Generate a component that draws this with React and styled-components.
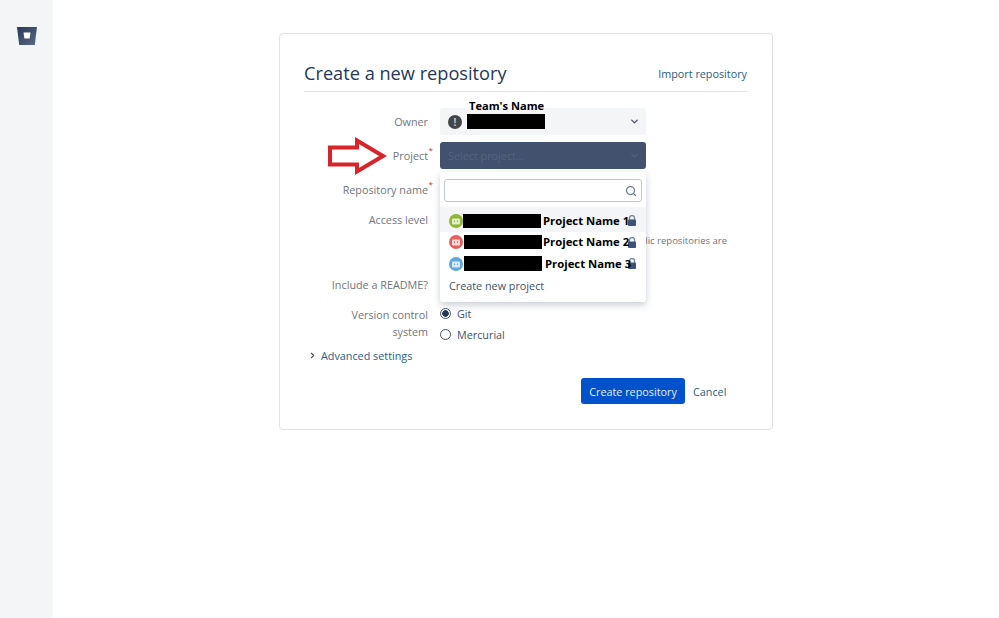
import React from 'react'
import styled, { createGlobalStyle } from 'styled-components'
import { ChevronDown, ChevronRight, Search } from 'lucide-react'

const GlobalStyle = createGlobalStyle`
  html, body {
    margin: 0;
    padding: 0;
    background: #FFFFFF;
    font-family: "Open Sans", "Noto Sans", sans-serif;
    font-size: 10.8px;
    color: #172B4D;
  }
`

const Page = styled.div`
  display: flex;
  width: 999px;
  height: 618px;
  overflow: hidden;
`

const Sidebar = styled.aside`
  width: 53px;
  flex-shrink: 0;
  background: #F4F5F7;
  padding: 27px 0 0 17px;
  box-sizing: border-box;
`

const Main = styled.main`
  flex: 1;
  padding: 33px 0 0 226px;
`

const Card = styled.section`
  position: relative;
  box-sizing: border-box;
  width: 494px;
  height: 397px;
  padding: 26px 25px 0 24px;
  border: 1px solid #DFE1E6;
  border-radius: 4px;
  background: #FFFFFF;
`

const Header = styled.header`
  display: flex;
  justify-content: space-between;
  align-items: flex-end;
  height: 31px;
  margin-bottom: 16px;
  border-bottom: 1px solid #DFE1E6;
`

const Title = styled.h1`
  margin: 0 0 6px;
  font-size: 18.2px;
  font-weight: 400;
  line-height: 24px;
  color: #253858;
`

const HeaderLink = styled.a`
  margin-bottom: 10px;
  color: #2A5C85;
`

const Row = styled.div`
  position: relative;
  display: grid;
  grid-template-columns: 124px 206px;
  column-gap: 12px;
  height: ${(p) => p.$height}px;
`

const Label = styled.label`
  position: relative;
  justify-self: end;
  text-align: right;
  color: #70757E;
  line-height: 17px;
  padding-top: ${(p) => p.$top || 0}px;
  width: ${(p) => (p.$narrow ? '90px' : 'auto')};
`

const Star = styled.span`
  position: absolute;
  top: ${(p) => p.$top}px;
  right: -5px;
  color: #C8322B;
  font-size: 8px;
  line-height: 8px;
`

const Select = styled.div`
  display: flex;
  align-items: center;
  justify-content: space-between;
  box-sizing: border-box;
  height: 27px;
  padding: 0 6px 0 8px;
  border-radius: 3px;
  background: ${(p) => (p.$focus ? '#42526E' : '#F4F5F7')};
  color: ${(p) => (p.$focus ? '#52637F' : '#172B4D')};
`

const OwnerValue = styled.div`
  display: flex;
  align-items: center;
  gap: 5px;
`

const OwnerAvatar = styled.span`
  display: flex;
  align-items: center;
  justify-content: center;
  width: 14px;
  height: 14px;
  border-radius: 50%;
  background: #42454A;
  color: #C8C8C8;
  font-size: 10px;
  font-weight: 700;
`

const Redacted = styled.span`
  display: block;
  flex-shrink: 0;
  width: 78px;
  height: ${(p) => p.$height}px;
  margin-left: ${(p) => p.$offset || 0}px;
  background: #000000;
`

const Annotation = styled.span`
  position: absolute;
  top: -9px;
  left: 165px;
  color: #000000;
  font-size: 11.1px;
  font-weight: 700;
  line-height: 14px;
`

const Arrow = styled.svg`
  position: absolute;
  left: 23px;
  top: -5px;
`

const Dropdown = styled.div`
  position: absolute;
  z-index: 2;
  top: 30px;
  left: 136px;
  box-sizing: border-box;
  width: 206px;
  height: 130px;
  background: #FFFFFF;
  border-radius: 0 0 3px 3px;
  box-shadow: 0 3px 7px rgba(9, 30, 66, 0.22);
  padding-top: 7px;
`

const SearchBox = styled.div`
  display: flex;
  align-items: center;
  justify-content: flex-end;
  box-sizing: border-box;
  height: 23px;
  margin: 0 4px 5px;
  padding-right: 4px;
  border: 1px solid #C1C7D0;
  border-radius: 3px;
  color: #6B778C;
`

const Option = styled.div`
  position: relative;
  box-sizing: border-box;
  display: flex;
  align-items: center;
  height: ${(p) => p.$height}px;
  padding: ${(p) => p.$nudge}px 0 0 9px;
  background: ${(p) => (p.$active ? '#F4F5F7' : 'transparent')};
`

const OptionName = styled.span`
  position: relative;
  z-index: 1;
  margin-left: ${(p) => p.$gap}px;
  color: #000000;
  font-size: 11.3px;
  font-weight: 700;
  white-space: nowrap;
`

const LockIcon = styled.svg`
  position: absolute;
  right: 9px;
  top: 50%;
  margin-top: -5px;
`

const CreateOption = styled.div`
  padding: 3px 0 0 9px;
  color: #42526E;
  line-height: 17px;
`

const Hint = styled.div`
  position: absolute;
  top: 28px;
  left: 136px;
  width: 287px;
  text-align: right;
  color: #70757E;
  font-size: 9.5px;
  white-space: nowrap;
`

const RadioGroup = styled.div`
  display: flex;
  flex-direction: column;
  gap: 4px;
  margin-top: -1px;
`

const RadioRow = styled.div`
  display: flex;
  align-items: center;
  gap: 6px;
  height: 17px;
  color: #42526E;
`

const Radio = styled.span`
  box-sizing: border-box;
  display: block;
  width: 11px;
  height: 11px;
  border: 1px solid #42526E;
  border-radius: 50%;
  background: ${(p) => (p.$checked ? 'radial-gradient(circle, #253858 0 3px, #FFFFFF 3.5px)' : '#FFFFFF')};
`

const Advanced = styled.a`
  display: flex;
  align-items: center;
  gap: 4px;
  height: 17px;
  margin: 5px 0 14px 4px;
  color: #2A5C85;
`

const Actions = styled.div`
  display: flex;
  align-items: center;
  padding-left: 277px;
  gap: 8px;
`

const PrimaryButton = styled.button`
  width: 104px;
  height: 26px;
  padding: 0;
  border: 0;
  border-radius: 3px;
  background: #0052CC;
  color: #E6EEFA;
  font: inherit;
`

const CancelLink = styled.a`
  color: #2A5C85;
`

const BitbucketLogo = () => (
  <svg width="20" height="18" viewBox="0 0 20 18">
    <defs>
      <linearGradient id="bucket" x1="0" y1="0" x2="1" y2="1">
        <stop offset="0" stopColor="#253858" />
        <stop offset="1" stopColor="#5E6C84" />
      </linearGradient>
    </defs>
    <path d="M0 0H20L17.8 18H2.2Z" fill="url(#bucket)" />
    <path d="M6.5 5.5H13.5L12.6 11.5H7.4Z" fill="#FFFFFF" />
  </svg>
)

const ProjectAvatar = ({ color }) => (
  <svg width="14" height="14" viewBox="0 0 14 14">
    <circle cx="7" cy="7" r="7" fill={color} />
    <rect x="3" y="4.5" width="8" height="6" rx="1" fill="#FFFFFF" opacity="0.75" />
    <rect x="5" y="6.5" width="1" height="1.5" fill={color} />
    <rect x="8" y="6.5" width="1" height="1.5" fill={color} />
  </svg>
)

const projects = [
  { color: '#8FB82F', name: 'Project Name 1', gap: 2, height: 25, nudge: 2, offset: 0, barHeight: 14, active: true },
  { color: '#E5605E', name: 'Project Name 2', gap: 1, height: 19, nudge: 0, offset: 1, barHeight: 14 },
  { color: '#5FA8D8', name: 'Project Name 3', gap: 3, height: 23, nudge: 2, offset: 1, barHeight: 15 }
]

const App = () => (
  <Page>
    <GlobalStyle />
    <Sidebar>
      <BitbucketLogo />
    </Sidebar>
    <Main>
      <Card>
        <Header>
          <Title>Create a new repository</Title>
          <HeaderLink>Import repository</HeaderLink>
        </Header>

        <Row $height={34}>
          <Label $top={5}>Owner</Label>
          <Select>
            <OwnerValue>
              <OwnerAvatar>!</OwnerAvatar>
              <Redacted $height={15} />
            </OwnerValue>
            <ChevronDown size={11} strokeWidth={3} color="#42526E" />
          </Select>
          <Annotation>Team's Name</Annotation>
        </Row>

        <Row $height={34}>
          <Arrow width="60" height="38" viewBox="0 0 60 38">
            <path d="M3 10.5H30V3.5L56 19L30 34.5V27.5H3Z" fill="none" stroke="#D8232A" strokeWidth="4" />
          </Arrow>
          <Label $top={5}>
            Project<Star $top={4}>*</Star>
          </Label>
          <Select $focus>
            Select project...
            <ChevronDown size={11} strokeWidth={3} color="#52637F" />
          </Select>
          <Dropdown>
            <SearchBox>
              <Search size={12} strokeWidth={2.5} />
            </SearchBox>
            {projects.map((project) => (
              <Option key={project.name} $height={project.height} $nudge={project.nudge} $active={project.active}>
                <ProjectAvatar color={project.color} />
                <Redacted $height={project.barHeight} $offset={project.offset} />
                <OptionName $gap={project.gap}>{project.name}</OptionName>
                <LockIcon width="10" height="11" viewBox="0 0 10 11">
                  <path d="M2.5 5V3a2.5 2.5 0 0 1 5 0V5" fill="none" stroke="#7A89A3" strokeWidth="1.4" />
                  <rect x="1" y="4.5" width="8" height="6.5" rx="1" fill="#3D5278" />
                </LockIcon>
              </Option>
            ))}
            <CreateOption>Create new project</CreateOption>
          </Dropdown>
        </Row>

        <Row $height={30}>
          <Label $top={5}>
            Repository name<Star $top={4}>*</Star>
          </Label>
        </Row>

        <Row $height={70}>
          <Label $top={5}>Access level</Label>
          <Hint>Anyone can see this. Public repositories are</Hint>
        </Row>

        <Row $height={30}>
          <Label>Include a README?</Label>
        </Row>

        <Row $height={36}>
          <Label $narrow>Version control system</Label>
          <RadioGroup>
            <RadioRow>
              <Radio $checked />
              Git
            </RadioRow>
            <RadioRow>
              <Radio />
              Mercurial
            </RadioRow>
          </RadioGroup>
        </Row>

        <Advanced>
          <ChevronRight size={9} strokeWidth={3} color="#42526E" />
          Advanced settings
        </Advanced>

        <Actions>
          <PrimaryButton>Create repository</PrimaryButton>
          <CancelLink>Cancel</CancelLink>
        </Actions>
      </Card>
    </Main>
  </Page>
)

export default App
